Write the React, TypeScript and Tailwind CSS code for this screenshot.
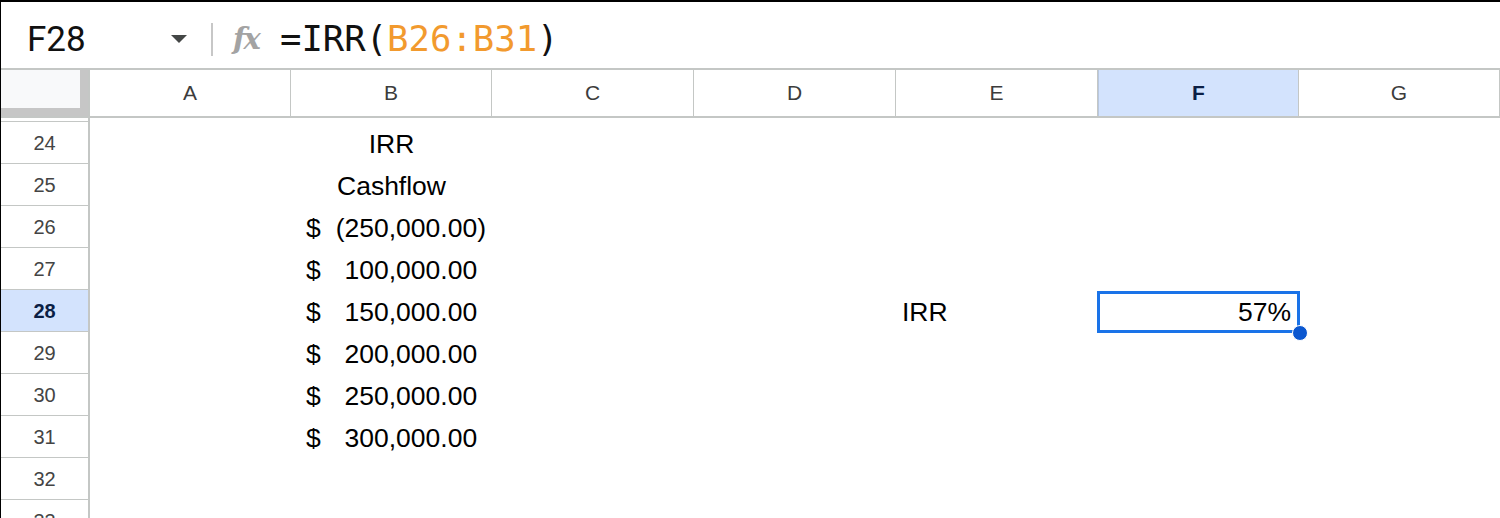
import React from "react";

const cols = [
  { name: "A", w: "w-[201px]" },
  { name: "B", w: "w-[201px]" },
  { name: "C", w: "w-[202px]" },
  { name: "D", w: "w-[202px]" },
  { name: "E", w: "w-[202px]" },
  { name: "F", w: "w-[201px]" },
  { name: "G", w: "flex-1" },
];

type Acc = { neg?: boolean; v: string };

const rows: { n: number; b?: string; acc?: Acc; e?: string; f?: string }[] = [
  { n: 24, b: "IRR" },
  { n: 25, b: "Cashflow" },
  { n: 26, acc: { neg: true, v: "250,000.00" } },
  { n: 27, acc: { v: "100,000.00" } },
  { n: 28, acc: { v: "150,000.00" }, e: "IRR", f: "57%" },
  { n: 29, acc: { v: "200,000.00" } },
  { n: 30, acc: { v: "250,000.00" } },
  { n: 31, acc: { v: "300,000.00" } },
  { n: 32 },
  { n: 33 },
];

export default function App() {
  return (
    <div className="w-[1500px] h-[518px] overflow-hidden bg-white border-t-2 border-l border-black font-['Liberation_Sans',Arial,sans-serif] text-black">
      {/* Formula bar */}
      <div className="h-[66px] flex items-center pt-[8px]">
        <div className="w-[210px] flex items-center pl-[26px] pr-[24px]">
          <span className="font-['Roboto',Arial,sans-serif] text-[35px] leading-none text-[#111]">F28</span>
          <span className="ml-auto">
            <svg width="16" height="8" viewBox="0 0 16 8">
              <path d="M0 0 L16 0 L8 8 Z" fill="#444746" />
            </svg>
          </span>
        </div>
        <div className="w-[2px] h-[33px] bg-[#c7c7c7]" />
        <span className="ml-[20px] w-[34px] font-['DejaVu_Serif',serif] italic font-bold text-[29px] leading-none text-[#a3a3a3] tracking-[-2px]">fx</span>
        <span className="ml-[13px] font-['DejaVu_Sans_Mono',monospace] text-[35.6px] leading-none text-[#111]">
          =IRR(<span className="text-[#f29a2e]">B26:B31</span>)
        </span>
      </div>

      {/* Column headers */}
      <div className="flex h-[50px] border-t-2 border-b-2 border-[#c4c7c5]">
        <div className="w-[89px] border-r-2 border-[#c4c7c5] flex">
          <div className="flex-1 bg-[#f8f9fa] border-r-[8px] border-b-[8px] border-[#c6c6c6]" />
        </div>
        {cols.map((c) => (
          <div
            key={c.name}
            className={`${c.w} flex items-center justify-center text-[21px] border-r border-[#c4c7c5] ${
              c.name === "F" ? "bg-[#d3e3fd] text-[#0b1f45] font-bold border-l border-l-[#b8c7e0]" : "text-[#3c3c3c]"
            }`}
          >
            {c.name}
          </div>
        ))}
      </div>

      {/* partial row 23 strip */}
      <div className="flex h-[4px]">
        <div className="w-[89px] border-r-2 border-b border-[#c4c7c5]" />
      </div>

      {/* Body rows */}
      {rows.map((r) => (
        <div key={r.n} className="flex h-[42px]">
          <div
            className={`w-[89px] shrink-0 border-r-2 border-b border-[#c4c7c5] flex items-center justify-center text-[20px] ${
              r.n === 28 ? "bg-[#d3e3fd] font-bold text-[#0b1f45]" : "text-[#444]"
            }`}
          >
            {r.n}
          </div>
          {/* A */}
          <div className="w-[201px]" />
          {/* B */}
          <div className="w-[201px] flex items-center pt-[3px] text-[26.5px] leading-none">
            {r.b && <div className="w-full text-center">{r.b}</div>}
            {r.acc && (
              <div className="w-full flex items-center pl-[15px] pr-[6px]">
                <span>$</span>
                <span className="ml-auto">
                  {r.acc.neg ? `(${r.acc.v})` : r.acc.v}
                  {!r.acc.neg && <span className="invisible">)</span>}
                </span>
              </div>
            )}
          </div>
          {/* C */}
          <div className="w-[202px]" />
          {/* D */}
          <div className="w-[202px]" />
          {/* E */}
          <div className="w-[202px] flex items-center pt-[3px] pl-[6px] text-[26.5px] leading-none">{r.e}</div>
          {/* F */}
          <div className="w-[201px] relative flex items-center justify-end pt-[3px] pr-[8px] text-[26.5px] leading-none">
            {r.f}
            {r.n === 28 && (
              <>
                <div className="absolute left-[-1px] top-[1px] right-[-1px] bottom-[-1px] border-[3px] border-[#1a73e8]" />
                <div className="absolute right-[-9px] bottom-[-9px] w-[16px] h-[16px] rounded-full bg-[#0b57d0] border border-white" />
              </>
            )}
          </div>
          <div className="flex-1" />
        </div>
      ))}
    </div>
  );
}
